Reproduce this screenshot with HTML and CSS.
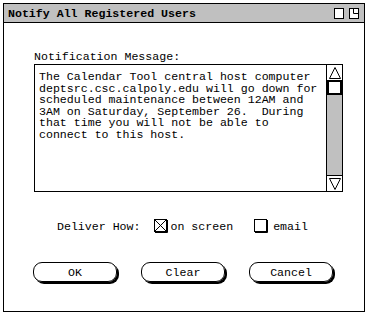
FILE: index.html
```html
<!DOCTYPE html>
<html lang="en">
<head>
  <meta charset="UTF-8" />
  <title>Notify All Registered Users</title>
  <link rel="stylesheet" href="styles.css">
</head>
<body>
  <div class="window">
    <div class="titlebar">
      <span class="title">Notify All Registered Users</span>
      <span class="controls">
        <span class="ctl"></span>
        <svg class="ctl-svg" width="10" height="11" viewBox="0 0 10 11">
          <rect x="0.5" y="0.5" width="9" height="10" fill="#fff" stroke="#000"/>
          <path d="M4.5 0.5 V5.5 H9.5" fill="none" stroke="#000"/>
        </svg>
      </span>
    </div>

    <div class="body">
      <div class="label">Notification Message:</div>

      <div class="message">
        <div class="message-text">The Calendar Tool central host computer
deptsrc.csc.calpoly.edu will go down for
scheduled maintenance between 12AM and
3AM on Saturday, September 26.  During
that time you will not be able to
connect to this host.</div>
        <div class="scrollbar">
          <div class="arrow up">
            <svg width="12" height="12" viewBox="0 0 12 12"><path d="M6 0.5 L11.5 11.5 H0.5 Z" fill="#fff" stroke="#000"/></svg>
          </div>
          <div class="thumb"></div>
          <div class="track"></div>
          <div class="arrow down">
            <svg width="12" height="12" viewBox="0 0 12 12"><path d="M0.5 0.5 H11.5 L6 11.5 Z" fill="#fff" stroke="#000"/></svg>
          </div>
        </div>
      </div>

      <div class="deliver">
        <span class="deliver-label">Deliver How:</span>
        <span class="option">
          <svg class="check" width="14" height="14" viewBox="0 0 14 14">
            <rect x="0.5" y="0.5" width="12" height="12" fill="#fff" stroke="#000"/>
            <path d="M13.5 1 V13.5 H1" fill="none" stroke="#000"/>
            <path d="M1 1 L12 12 M12 1 L1 12" stroke="#000"/>
          </svg>
          <span>on screen</span>
        </span>
        <span class="option email">
          <svg class="check" width="14" height="14" viewBox="0 0 14 14">
            <rect x="0.5" y="0.5" width="12" height="12" fill="#fff" stroke="#000"/>
            <path d="M13.5 1 V13.5 H1" fill="none" stroke="#000"/>
          </svg>
          <span>email</span>
        </span>
      </div>

      <div class="buttons">
        <div class="btn">OK</div>
        <div class="btn">Clear</div>
        <div class="btn">Cancel</div>
      </div>
    </div>
  </div>
</body>
</html>
```

FILE: styles.css
```css
body {
  margin: 0;
  background-color: #fff;
  color: #000;
  font-family: 'Liberation Mono', 'DejaVu Sans Mono', monospace;
  font-size: 11.6px;
}

.window {
  margin: 3px 0 0 3px;
  width: 362px;
  height: 309px;
  box-sizing: border-box;
  border: 1px solid #000;
  display: flex;
  flex-direction: column;
}

.titlebar {
  height: 18px;
  background-color: #c0c0c0;
  border-bottom: 1px solid #000;
  display: flex;
  align-items: center;
  justify-content: space-between;
  padding: 0 5px 0 4px;
}

.title {
  font-weight: bold;
  font-size: 11.6px;
  padding-top: 1px;
}

.controls {
  display: flex;
  gap: 5px;
  align-items: center;
}

.ctl {
  width: 8px;
  height: 9px;
  border: 1px solid #000;
  background-color: #fff;
}

.ctl-svg {
  display: block;
}

.body {
  flex: 1;
  padding: 27px 0 0 30px;
}

.label {
  line-height: 13px;
  margin-bottom: 1px;
}

.message {
  width: 309px;
  height: 128px;
  box-sizing: border-box;
  border: 1px solid #000;
  display: flex;
}

.message-text {
  flex: 1;
  white-space: pre;
  line-height: 11.5px;
  padding: 6px 0 0 4px;
}

.scrollbar {
  width: 15px;
  border-left: 1px solid #000;
  display: flex;
  flex-direction: column;
}

.arrow {
  height: 15px;
  display: flex;
  align-items: center;
  justify-content: center;
}

.arrow.up {
  border-bottom: 1px solid #000;
}

.arrow.down {
  border-top: 1px solid #000;
}

.thumb {
  height: 14px;
  box-sizing: border-box;
  border: 2px solid #000;
  border-top-width: 1px;
  background-color: #fff;
}

.track {
  flex: 1;
  background-color: #c0c0c0;
}

.deliver {
  display: flex;
  align-items: center;
  margin: 27px 0 0 23px;
  height: 14px;
}

.deliver-label {
  margin-right: 13px;
}

.option {
  display: flex;
  align-items: center;
  gap: 3px;
  margin-right: 21px;
}

.option.email {
  gap: 5px;
}

.check {
  display: block;
}

.buttons {
  display: flex;
  gap: 24px;
  margin: 29px 0 0 -1px;
}

.btn {
  width: 84px;
  height: 20px;
  box-sizing: border-box;
  border: 1px solid #000;
  border-radius: 9px;
  box-shadow: 2px 2px 0 #000;
  display: flex;
  align-items: center;
  justify-content: center;
}
```
